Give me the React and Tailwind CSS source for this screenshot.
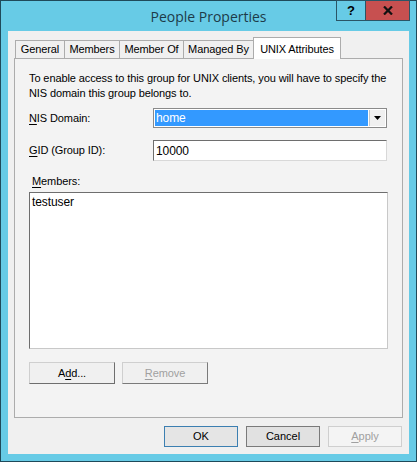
const Tab = ({ label, w, first }) => (
  <div
    className={`h-[18px] border border-b-0 border-[#acacac] bg-[#f0f0f0] flex items-center justify-center text-[11px] tracking-[-0.1px] text-black ${first ? "" : "-ml-px"}`}
    style={{ width: w }}
  >
    {label}
  </div>
);

const Btn = ({ children, className = "" }) => (
  <div className={`h-[22px] flex items-center justify-center text-[11px] ${className}`}>{children}</div>
);

export default function App() {
  return (
    <div
      className="w-[417px] h-[462px] border border-[#1f4a5a] bg-[#67cbe6] flex flex-col"
      style={{ fontFamily: '"Liberation Sans", Arial, sans-serif' }}
    >
      {/* title bar */}
      <div className="h-[30px] grid grid-cols-[1fr_auto_1fr] shrink-0">
        <div />
        <div className="flex items-center text-[14px] text-[#1d3b49] pt-[1px]" style={{ fontFamily: '"Open Sans", sans-serif' }}>
          People Properties
        </div>
        <div className="flex justify-end items-start pr-[6px] -mt-px">
          <div className="w-[30px] h-[21px] border border-[#2a5566] flex items-center justify-center text-[13px] font-bold text-black">
            ?
          </div>
          <div className="w-[45px] h-[21px] -ml-px border border-[#2a5566] bg-[#c75050] flex items-center justify-center">
            <svg width="10" height="9" viewBox="0 0 10 9">
              <path d="M1 0.5 L9 8.5 M9 0.5 L1 8.5" stroke="#111" strokeWidth="2.2" />
            </svg>
          </div>
        </div>
      </div>

      {/* client */}
      <div className="flex-1 mx-[7px] mb-[7px] bg-[#f0f0f0] flex flex-col pt-[6px] px-[6px]">
        {/* tabs */}
        <div className="h-[21px] flex items-end pl-[1px]">
          <Tab label="General" w={50} first />
          <Tab label="Members" w={56} />
          <Tab label="Member Of" w={65} />
          <Tab label="Managed By" w={71} />
          <div className="w-[88px] h-[22px] -ml-px -mb-px relative z-10 border border-b-0 border-[#acacac] bg-white flex items-start justify-center pt-[3px] text-[11px] tracking-[-0.1px] text-black">
            UNIX Attributes
          </div>
        </div>

        {/* panel */}
        <div className="h-[360px] border border-[#acacac] bg-[#f3f3f3] flex flex-col pl-[14px] pr-[14px] pt-[12px] text-[11px] tracking-[-0.1px]">
          <p className="leading-[15px] text-black">
            To enable access to this group for UNIX clients, you will have to specify the NIS domain this group belongs to.
          </p>

          <div className="mt-[7px] flex items-center">
            <div className="w-[124px] text-black">
              <span className="underline underline-offset-2">N</span>IS Domain:
            </div>
            <div className="w-[234px] h-[20px] border border-[#8a8a8a] bg-white flex p-[1px]">
              <div className="flex-1 bg-[#3399ff] text-white text-[12px] flex items-center pl-[1px]">home</div>
              <div className="w-[16px] ml-[1px] bg-[#f0f0f0] border-l border-[#c8c8c8] flex items-center justify-center">
                <svg width="7" height="4" viewBox="0 0 7 4">
                  <path d="M0 0 H7 L3.5 4 Z" fill="#000" />
                </svg>
              </div>
            </div>
          </div>

          <div className="mt-[12px] flex items-center">
            <div className="w-[124px] text-black">
              <span className="underline underline-offset-2">G</span>ID (Group ID):
            </div>
            <div className="w-[234px] h-[21px] border border-[#d8d8d8] border-t-[#6e6e6e] border-l-[#6e6e6e] bg-white text-[12px] flex items-center pl-[2px] text-black">
              10000
            </div>
          </div>

          <div className="mt-[13px] pl-[3px] text-black leading-[15px]">
            <span className="underline underline-offset-2">M</span>embers:
          </div>
          <div className="mt-[3px] w-[359px] h-[157px] border border-[#c8c8c8] border-t-[#6e6e6e] border-l-[#6e6e6e] bg-white text-[12px] text-black pl-[2px] pt-[2px] leading-[15px]">
            testuser
          </div>

          <div className="mt-[13px] flex gap-[7px]">
            <Btn className="w-[86px] border border-[#cfcfcf] border-r-[#6e6e6e] border-b-[#6e6e6e] bg-[#f0f0f0] text-black">
              A<span className="underline underline-offset-2">d</span>d...
            </Btn>
            <Btn className="w-[86px] border border-[#cfcfcf] border-r-[#7a7a7a] border-b-[#7a7a7a] bg-[#f0f0f0] text-[#a0a0a0]">
              <span className="underline underline-offset-2">R</span>emove
            </Btn>
          </div>
        </div>

        {/* dialog buttons */}
        <div className="mt-[8px] flex justify-end gap-[8px] pr-[1px]">
          <Btn className="w-[74px] !h-[21px] border border-[#3c7fb1] bg-[#e5e5e5] text-black">OK</Btn>
          <Btn className="w-[74px] !h-[21px] border border-[#7a7a7a] bg-[#e1e1e1] text-black">Cancel</Btn>
          <Btn className="w-[74px] !h-[21px] border border-[#cfcfcf] bg-[#f4f4f4] text-[#a0a0a0]">
            <span className="underline underline-offset-2">A</span>pply
          </Btn>
        </div>
      </div>
    </div>
  );
}
